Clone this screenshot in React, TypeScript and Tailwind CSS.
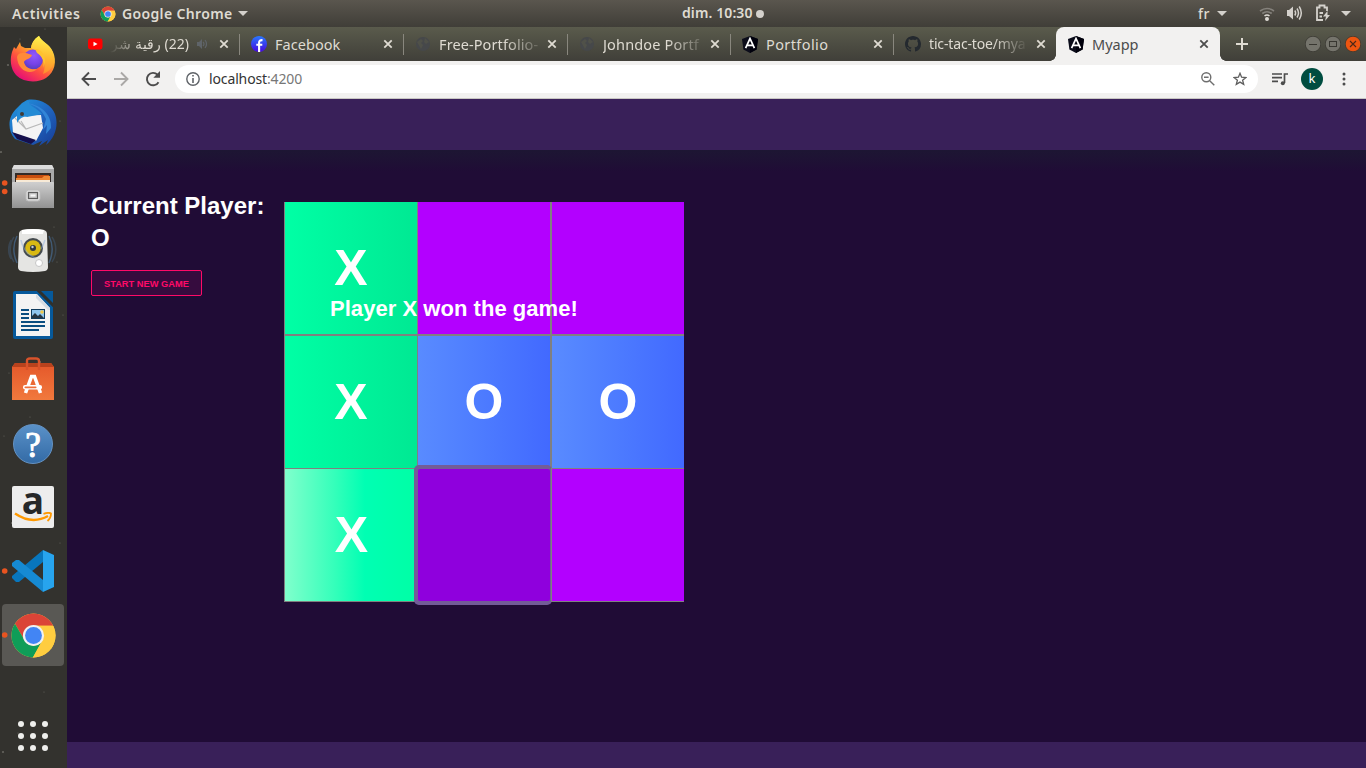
import React from "react";

const ui = "font-['Noto_Sans','Open_Sans',sans-serif]";

function Chrome({ size }: { size: number }) {
  return (
    <svg width={size} height={size} viewBox="0 0 48 48" className="shrink-0">
      <defs>
        <clipPath id={`chromeClip${size}`}>
          <circle cx="24" cy="24" r="22.5" />
        </clipPath>
      </defs>
      <g clipPath={`url(#chromeClip${size})`}>
        <rect width="48" height="48" fill="#ffcd40" />
        <path d="M0 0H48V14H24A10.4 10.4 0 0 0 15 29L4.5 11Z" fill="#db4437" />
        <path d="M0 8 4.5 11 15 29.2A10.4 10.4 0 0 0 33 29.2L22.5 48H0Z" fill="#0f9d58" />
        <path d="M24 14H48V48H22.5L33 29.2A10.4 10.4 0 0 0 24 14Z" fill="#ffcd40" />
      </g>
      <circle cx="24" cy="24" r="10.8" fill="#f1f1f1" />
      <circle cx="24" cy="24" r="8.6" fill="#4285f4" />
    </svg>
  );
}

function Firefox() {
  return (
    <svg width="48" height="48" viewBox="0 0 48 48">
      <defs>
        <linearGradient id="ffBody" x1="0.8" y1="0.1" x2="0.25" y2="0.95">
          <stop offset="0" stopColor="#fff44f" />
          <stop offset="0.35" stopColor="#ffa52a" />
          <stop offset="0.65" stopColor="#ff5040" />
          <stop offset="1" stopColor="#e60f75" />
        </linearGradient>
        <radialGradient id="ffGlobe" cx="0.55" cy="0.3" r="0.75">
          <stop offset="0" stopColor="#9059ff" />
          <stop offset="0.6" stopColor="#7542e5" />
          <stop offset="1" stopColor="#4f3fb5" />
        </radialGradient>
        <linearGradient id="ffTail" x1="0.6" y1="0" x2="0.5" y2="1">
          <stop offset="0" stopColor="#fff44f" />
          <stop offset="0.6" stopColor="#ffb52e" />
          <stop offset="1" stopColor="#ff8a30" />
        </linearGradient>
      </defs>
      <path d="M3 17 5 12 7 14 11 7 12 11 16 13 22 13C23 6 27 3 30 1C32 6 41 9 44 17C48 26 46 37 37 43C29 48 15 48 7 40C1 33 1 24 3 17Z" fill="url(#ffBody)" />
      <path d="M22 13C23 6 27 3 30 1C32 7 41 9 44 18C47 27 43 36 34 39C38 30 35 20 22 13Z" fill="url(#ffTail)" />
      <circle cx="24" cy="24.5" r="10" fill="url(#ffGlobe)" />
      <path d="M8 22C9 17 14 18 17 18L23 20C22 24 16 24 15 27C16 33 22 35 28 34C22 40 9 37 8 22Z" fill="#ff8a38" />
      <path d="M26 14C34 14 39 24 34 33C36 27 33 21 28 18Z" fill="#ffc22f" />
    </svg>
  );
}

function Thunderbird() {
  return (
    <svg width="50" height="50" viewBox="0 0 50 50" className="relative top-px">
      <defs>
        <linearGradient id="tb" x1="0" y1="0" x2="1" y2="1">
          <stop offset="0" stopColor="#1f9ae0" />
          <stop offset="0.5" stopColor="#2067c2" />
          <stop offset="1" stopColor="#173b94" />
        </linearGradient>
      </defs>
      <path d="M14 4 19 1C31 -1 43 5 47 15C51 26 47 39 38 46L40 41 31 47 34 42 25 46 7 40C-1 31 0 18 8 10Z" fill="url(#tb)" />
      <path d="M4 21 9 17 33 16 35 29 28 42 5 34Z" fill="#f4f4f4" />
      <path d="M7 19 18 30 35 24M18 30 13 22" fill="none" stroke="#b8b8b8" strokeWidth="1.1" />
      <path d="M4 33 28 41 23 45 9 40Z" fill="#160f4c" />
      <path d="M9 18C8 8 15 2 22 2C18 6 27 7 34 15L19 18C15 17 11 20 9 24Z" fill="#248bd5" />
      <path d="M15 4C28 5 34 11 38 20L35 31 39 26 38 35 43 29C44 15 32 4 15 4Z" fill="#3285d7" />
      <circle cx="14" cy="15" r="2" fill="#403a35" />
    </svg>
  );
}

function Files() {
  return (
    <svg width="44" height="46" viewBox="0 0 44 46">
      <defs>
        <linearGradient id="fl" x1="0" y1="0" x2="0" y2="1">
          <stop offset="0" stopColor="#cfcfcf" />
          <stop offset="1" stopColor="#929292" />
        </linearGradient>
      </defs>
      <path d="M3 1H41L43 5V44H1V5Z" fill="#a9a9a9" />
      <path d="M3 1H41L43 5H1Z" fill="#dcdcdc" />
      <rect x="4" y="9" width="36" height="10" fill="#332b27" />
      <path d="M6 11H38V20H5Z" fill="#c74e0e" />
      <path d="M5 14H31L33 12H39V20H5Z" fill="#f08a36" />
      <path d="M5 16H39V20H5Z" fill="#f7ead7" />
      <rect x="1" y="18" width="42" height="26" rx="1" fill="url(#fl)" />
      <rect x="15" y="26" width="14" height="11" rx="2.5" fill="#dedede" stroke="#bcbcbc" />
      <rect x="17.5" y="28.5" width="9" height="6" fill="#c8c8c8" stroke="#5c5c5c" strokeWidth="1.2" />
      <rect x="19.5" y="30.5" width="5" height="2" fill="#f7f7f7" />
    </svg>
  );
}

function Speaker() {
  return (
    <svg width="50" height="46" viewBox="0 0 50 46">
      <g fill="none" stroke="#456486" strokeWidth="1.5">
        <path d="M6 9C1 16 1 27 6 34M3 12C0 18 0 25 3 31" opacity=".4" />
        <path d="M9 8C5 16 5 26 9 35M41 8C45 16 45 26 41 35" opacity=".8" />
        <path d="M44 9C49 16 49 27 44 34" opacity=".4" />
      </g>
      <path d="M14 2Q25 0 36 2Q39 3 39 6L40 39Q40 42 37 43Q25 45 13 43Q10 42 10 39L11 6Q11 3 14 2Z" fill="#e5e5e3" />
      <path d="M14 2Q25 0 36 2L35 6H14Z" fill="#fff" />
      <circle cx="25" cy="20" r="10" fill="#444a4e" />
      <circle cx="25" cy="20" r="7.8" fill="#d8b913" />
      <circle cx="25" cy="20" r="3" fill="#303840" />
      <circle cx="24.5" cy="19" r="1.2" fill="#c8d0d4" />
      <circle cx="31" cy="35" r="3.5" fill="#fff" stroke="#c6c6c6" />
      <path d="M13 12Q15 24 27 30M37 12Q35 18 33 21" stroke="#89aee0" strokeWidth="1.5" fill="none" opacity=".45" />
    </svg>
  );
}

function Writer() {
  return (
    <svg width="42" height="50" viewBox="0 0 42 50">
      <path d="M3 1H25L41 17V47Q41 49 39 49H3Q1 49 1 47V3Q1 1 3 1Z" fill="#06599b" />
      <path d="M4 4H25L38 18V46H4Z" fill="#f3f3f3" />
      <path d="M24 4V8L36 20H38V18Z" fill="#d5dce4" />
      <path d="M25 1 41 17V13L29 1Z" fill="#2f302d" />
      <path d="M29 1H41V13Z" fill="#06599b" />
      <path d="M9 20H17M9 24H17M9 28H17M9 32H33M9 36H33M9 40H27" stroke="#094d80" strokeWidth="2" />
      <rect x="19.5" y="19.500" width="13" height="9" fill="#8ec5ee" stroke="#103c5e" />
      <circle cx="30" cy="22" r="1.8" fill="#f0c94a" />
      <path d="M20 28V26L23 23 26 26 28 24 32 28Z" fill="#253441" />
    </svg>
  );
}

function Bag() {
  return (
    <svg width="42" height="44" viewBox="0 0 42 44">
      <defs>
        <linearGradient id="bag" x1="0" y1="0" x2="0" y2="1">
          <stop offset="0" stopColor="#e4572a" />
          <stop offset="1" stopColor="#f1793d" />
        </linearGradient>
      </defs>
      <path d="M3 6H39L42 10V43H0V10Z" fill="url(#bag)" />
      <path d="M3 6H39L42 10H0Z" fill="#b8421d" />
      <path d="M15 13V4Q15 1.5 18 1.5H24Q27 1.5 27 4V13" fill="none" stroke="#d9532b" strokeWidth="2.4" />
      <path d="M13.5 36 19.5 19.5H22.5L28.5 36" fill="none" stroke="#fff" strokeWidth="3.5" />
      <rect x="11" y="28" width="19" height="4.4" rx="2" fill="#fff" />
      <rect x="12.5" y="29.4" width="12" height="1.8" rx=".8" fill="#ef703a" />
    </svg>
  );
}

function Code() {
  return (
    <svg width="42" height="42" viewBox="0 0 42 42">
      <path d="M31 0V12L7 32 4 32 0 28V26Z" fill="#0876bd" />
      <path d="M0 13 4 10 7 10 31 30V42L0 16Z" fill="#168ad3" />
      <path d="M31 0 42 5V37L31 42Z" fill="#27a4ee" />
    </svg>
  );
}

function Angular() {
  return (
    <svg width="16" height="17" viewBox="0 0 16 17" className="shrink-0">
      <path d="M8 0 16 3 14.6 13.5 8 17 1.4 13.5 0 3Z" fill="#0b0c1a" />
      <path d="M8 0 16 3 14.6 13.5 8 17Z" fill="#00000c" />
      <path d="M3.6 12.2 8 2.6 12.4 12.2M5.4 9.4H10.6" stroke="#fff" strokeWidth="1.7" fill="none" />
    </svg>
  );
}

function Youtube() {
  return (
    <svg width="16" height="12" viewBox="0 0 16 12" className="shrink-0">
      <rect x="1" y="0.5" width="14.5" height="11" rx="2.4" fill="#f00" />
      <path d="M6.5 3.7V8.3L10.5 6Z" fill="#fff" />
    </svg>
  );
}

function Facebook() {
  return (
    <svg width="16" height="16" viewBox="0 0 16 16" className="shrink-0">
      <defs>
        <linearGradient id="fb" x1="0" y1="0" x2="0" y2="1">
          <stop offset="0" stopColor="#2878ff" />
          <stop offset="1" stopColor="#4708dd" />
        </linearGradient>
      </defs>
      <circle cx="8" cy="8" r="8" fill="url(#fb)" />
      <path d="M8.1 16V6.5Q8.1 4 11.5 4.1M5.3 8.7H11.3" stroke="#fff" strokeWidth="2.1" fill="none" />
    </svg>
  );
}

function Globe() {
  return (
    <svg width="16" height="16" viewBox="0 0 16 16" className="shrink-0">
      <circle cx="8" cy="8" r="7" fill="#46484a" />
      <path d="M2 6 6 3 8 5 6 7 8 9 6 13ZM10 2 14 6 11 8 9 6Z" fill="#505149" />
    </svg>
  );
}

function Github() {
  return (
    <svg width="16" height="16" viewBox="0 0 16 16" fill="#24292f" className="shrink-0">
      <path d="M8 0C3.58 0 0 3.58 0 8c0 3.54 2.29 6.53 5.47 7.59.4.07.55-.17.55-.38v-1.49c-2.01.37-2.53-.49-2.69-.94-.09-.23-.48-.94-.82-1.13-.28-.15-.68-.52-.01-.53.63-.01 1.08.58 1.23.82.72 1.21 1.87.87 2.33.66.07-.52.28-.87.51-1.07-1.78-.2-3.64-.89-3.64-3.95 0-.87.31-1.59.82-2.15-.08-.2-.36-1.02.08-2.12 0 0 .67-.21 2.2.82.64-.18 1.32-.27 2-.27s1.36.09 2 .27c1.53-1.04 2.2-.82 2.2-.82.44 1.1.16 1.92.08 2.12.51.56.82 1.27.82 2.15 0 3.07-1.87 3.75-3.65 3.95.29.25.54.73.54 1.48v2.19c0 .21.15.46.55.38A8 8 0 0 0 16 8c0-4.42-3.58-8-8-8Z" />
    </svg>
  );
}

function Close({ color }: { color: string }) {
  return (
    <svg width="10" height="10" viewBox="0 0 10 10" className="shrink-0">
      <path d="m1.3 1.3 7.4 7.4m0-7.4-7.4 7.4" stroke={color} strokeWidth="1.8" />
    </svg>
  );
}

function Caret() {
  return (
    <svg width="10" height="5" viewBox="0 0 10 5" className="shrink-0">
      <path d="M0 0H10L5 5Z" fill="#d4d1cc" />
    </svg>
  );
}

type TabProps = {
  icon: React.ReactNode;
  width: string;
  label: string;
  textClass: string;
  fade?: boolean;
};

function Tab({ icon, width, label, textClass, fade }: TabProps) {
  return (
    <div className={`flex h-[34px] shrink-0 items-center ${width}`}>
      {icon}
      <div className={`ml-2 flex-1 overflow-hidden whitespace-nowrap text-[14.5px] leading-[22px] text-[#dfdbd2] ${textClass} ${fade ? "[mask-image:linear-gradient(90deg,#000_60%,transparent)]" : ""}`}>
        {label}
      </div>
      <div className="ml-[1px] mr-[10px] flex">
        <Close color="#dfdbd2" />
      </div>
      <div className="h-[21px] w-px bg-[#89877e]" />
    </div>
  );
}

function TopBar() {
  return (
    <div className={`flex h-[27px] shrink-0 items-center bg-linear-to-b from-[#5a564e] to-[#403e38] text-[14px] font-semibold text-[#dfdbd2] ${ui}`}>
      <span className="ml-[12px] w-[88px] tracking-[0.6px]">Activities</span>
      <Chrome size={16} />
      <span className="ml-[6px] w-[111px] whitespace-nowrap tracking-[0.35px]">Google Chrome</span>
      <span className="ml-[5px]"><Caret /></span>
      <span className="ml-[434px] w-[71px] whitespace-nowrap pb-[2px] tracking-[0.1px]">dim. 10:30</span>
      <span className="ml-[3px] h-2 w-2 rounded-full bg-[#d4d1cc]" />
      <span className="ml-[434px] w-[14px] font-medium tracking-[0.5px]">fr</span>
      <span className="ml-[5px]"><Caret /></span>
      <svg width="16" height="14" viewBox="0 0 16 14" className="ml-[32px]" fill="none" stroke="#85827c" strokeWidth="1.6">
        <path d="M1 4Q8-1 15 4M3.3 6.5Q8 3 12.7 6.5" />
        <path d="M5.5 9Q8 7 10.5 9" stroke="#dedbd5" />
        <circle cx="8" cy="12" r="1.2" fill="#dedbd5" stroke="#dedbd5" />
      </svg>
      <svg width="17" height="16" viewBox="0 0 17 16" className="relative -top-px ml-[11px]" fill="none" stroke="#d4d1cc" strokeWidth="1.5">
        <path d="M1 5H3L7 1.5V14.5L3 11H1Z" fill="#d4d1cc" stroke="none" />
        <path d="M8.8 5.5Q10.4 8 8.8 10.5M11 3.5Q14 8 11 12.5M13.2 1.5Q17.4 8 13.2 14.5" />
      </svg>
      <svg width="16" height="18" viewBox="0 0 16 18" className="relative -top-px ml-[12px]" fill="none" stroke="#d4d1cc" strokeWidth="1.8">
        <path d="M8 16H2V3.5H4.5V1.5H9.5V3.5H12V7M4.5 9H8M4.5 12.5H7" />
        <path d="M12.5 7 8 12.5H11L10 17 15 11H12.5Z" fill="#d4d1cc" stroke="none" />
      </svg>
      <span className="ml-[10px]"><Caret /></span>
    </div>
  );
}

function Sidebar() {
  const stars = [[8, 38], [45, 2], [20, 12], [60, 94], [1, 125], [12, 151], [54, 200], [63, 288], [40, 335], [30, 390], [4, 409], [49, 470], [12, 496], [60, 516], [44, 665], [18, 706], [3, 725], [61, 622], [57, 235], [9, 346]];
  return (
    <aside className="relative flex w-[67px] shrink-0 flex-col items-center bg-[#33322e]">
      <svg className="absolute inset-0" width="67" height="741">
        {stars.map(([x, y], i) => <circle key={i} cx={x} cy={y} r={i % 4 === 0 ? 1.1 : 0.6} fill="#66655f" />)}
        <g fill="#e95420">
          <circle cx="4.7" cy="156" r="2.8" /><circle cx="4.7" cy="164.5" r="2.8" />
          <circle cx="4.7" cy="544" r="2.8" />
        </g>
      </svg>
      <div className="relative flex w-full flex-col items-center pr-[1px]">
        <div className="flex h-[64px] items-center"><Firefox /></div>
        <div className="flex h-[64px] items-center"><Thunderbird /></div>
        <div className="flex h-[64px] items-center"><Files /></div>
        <div className="flex h-[64px] items-center"><Speaker /></div>
        <div className="flex h-[64px] items-center"><Writer /></div>
        <div className="flex h-[64px] items-center"><Bag /></div>
        <div className="flex h-[64px] items-center pt-[2px]">
          <div className="flex h-10 w-10 items-center justify-center rounded-full border border-[#6593c4] bg-linear-to-b from-[#5a91c8] to-[#336ba6] pt-[2px] font-['Liberation_Serif',serif] text-[35px] leading-none text-white [-webkit-text-stroke:1px_white]">?</div>
        </div>
        <div className="flex h-[64px] items-center">
          <div className="flex h-[42px] w-[42px] flex-col items-center rounded-[2px] bg-[#ededed]">
            <div className="-mt-[7px] h-[33px] font-['Open_Sans',sans-serif] text-[37px] font-bold leading-[42px] text-[#262829]">a</div>
            <svg width="42" height="12" viewBox="0 0 42 12">
              <path d="M3 1.5Q20 13 36 4" fill="none" stroke="#ff9900" strokeWidth="2.4" />
              <path d="M31.500 1.800Q37 0 39 1.500Q39 6 35.500 9" fill="none" stroke="#ff9900" strokeWidth="1.8" />
            </svg>
          </div>
        </div>
        <div className="flex h-[64px] items-center"><Code /></div>
        <div className="mt-[1px] flex h-[62px] w-[62px] items-center justify-center rounded-[4px] bg-[#595854]"><Chrome size={47} /></div>
      </div>
      <svg className="absolute left-0 top-[605px]" width="9" height="9"><circle cx="4.7" cy="3" r="2.8" fill="#e95420" /></svg>
      <div className="relative mt-auto mb-[17px] mr-[1px] grid grid-cols-3 gap-[6px]">
        {Array.from({ length: 9 }, (_, i) => <span key={i} className="h-[6px] w-[6px] rounded-full bg-[#eeeeec]" />)}
      </div>
    </aside>
  );
}

function TabStrip() {
  return (
    <div className={`flex h-[34px] shrink-0 items-center bg-linear-to-b from-[#5a5b4c] to-[#403f39] pl-[20px] ${ui}`}>
      <div className="flex h-[34px] w-[153px] shrink-0 items-center">
        <Youtube />
        <div dir="rtl" className="ml-[7px] w-[79px] overflow-hidden whitespace-nowrap text-right text-[14px] leading-[22px] tracking-[-0.1px] text-[#dfdbd2] [mask-image:linear-gradient(270deg,#000_60%,transparent)]">(22) رقية شر</div>
        <svg width="10" height="10" viewBox="0 0 10 10" className="ml-[8px]" fill="none" stroke="#5f6469" strokeWidth="1.2">
          <path d="M0 3H2L5 0V10L2 7H0Z" fill="#5f6469" stroke="none" />
          <path d="M6 3Q8 5 6 7M8 1Q11 5 8 9" />
        </svg>
        <span className="ml-[12px]"><Close color="#dfdbd2" /></span>
        <div className="ml-[10px] h-[21px] w-px bg-[#89877e]" />
      </div>
      <div className="ml-[11px] flex gap-[11px]">
        <Tab icon={<Facebook />} width="w-[153px]" label="Facebook" textClass="tracking-[0.05px]" />
        <Tab icon={<Globe />} width="w-[153px]" label="Free-Portfolio-" textClass="tracking-[0.1px]" fade />
        <Tab icon={<Globe />} width="w-[152px]" label="Johndoe Portf" textClass="tracking-[0.15px]" fade />
        <Tab icon={<Angular />} width="w-[152px]" label="Portfolio" textClass="tracking-[0.4px]" />
        <div className="flex h-[34px] w-[151px] items-center">
          <Github />
          <div className="ml-2 w-[99px] overflow-hidden whitespace-nowrap text-[14px] leading-[22px] tracking-[-0.15px] text-[#dfdbd2] [mask-image:linear-gradient(90deg,#000_65%,transparent)]">tic-tac-toe/mya</div>
          <span className="ml-[8px]"><Close color="#dfdbd2" /></span>
        </div>
      </div>
      <div className="relative flex h-[34px] w-[164px] shrink-0 items-center rounded-t-[8px] bg-[#f2f1f0] pl-[12px]">
        <span className="absolute -left-[6px] bottom-0 h-[6px] w-[6px] bg-[radial-gradient(circle_at_0_0,transparent_5.5px,#f2f1f0_6px)]" />
        <span className="absolute -right-[6px] bottom-0 h-[6px] w-[6px] bg-[radial-gradient(circle_at_100%_0,transparent_5.5px,#f2f1f0_6px)]" />
        <Angular />
        <span className="ml-[8px] w-[107px] text-[14.5px] leading-[22px] text-[#4c4c4c]">Myapp</span>
        <Close color="#4c4c4c" />
      </div>
      <svg width="12" height="12" viewBox="0 0 12 12" className="ml-[16px] shrink-0"><path d="M6 0V12M0 6H12" stroke="#dfdbd2" strokeWidth="2" /></svg>
      <div className="ml-auto mr-[5px] flex gap-[4px]">
        {["min", "max", "close"].map((kind) => (
          <svg key={kind} width="16" height="16" viewBox="0 0 16 16">
            <circle cx="8" cy="8" r="7.8" fill={kind === "close" ? "#ed5510" : "#75746c"} stroke="#383731" strokeWidth=".8" />
            {kind === "min" && <path d="M4 8.5H12" stroke="#383731" />}
            {kind === "max" && <rect x="4.5" y="5.5" width="7" height="5" fill="none" stroke="#383731" />}
            {kind === "close" && <path d="m5 5 6 6m0-6-6 6" stroke="#4a2818" strokeWidth="1.1" />}
          </svg>
        ))}
      </div>
    </div>
  );
}

function Toolbar() {
  return (
    <div className={`flex h-[38px] shrink-0 items-center border-b border-[#c8c6c3] bg-[#f2f1f0] pb-[1px] ${ui}`}>
      <svg width="16" height="16" viewBox="0 0 16 16" className="ml-[14px]" fill="none" stroke="#4c4c4c" strokeWidth="1.9"><path d="M15 8H2M8 1.5 1.5 8 8 14.5" /></svg>
      <svg width="16" height="16" viewBox="0 0 16 16" className="ml-[16px]" fill="none" stroke="#aaa8a6" strokeWidth="1.9"><path d="M1 8H14M8 1.5 14.5 8 8 14.5" /></svg>
      <svg width="16" height="16" viewBox="0 0 16 16" className="ml-[16px]" fill="none" stroke="#4c4c4c" strokeWidth="1.9"><path d="M13.5 11.2A6.2 6.2 0 1 1 12.5 3.7L14 5.2" /><path d="M15 0V6.7H8.3Z" fill="#4c4c4c" stroke="none" /></svg>
      <div className="ml-[14px] flex h-[28px] w-[1083px] items-center rounded-full bg-white pl-[11px]">
        <svg width="14" height="14" viewBox="0 0 14 14" fill="none" stroke="#5f6368" strokeWidth="1.4"><circle cx="7" cy="7" r="6.2" /><path d="M7 3V4.5M7 6V11" strokeWidth="1.6" /></svg>
        <span className="ml-[9px] pb-[1px] text-[14px] tracking-[-0.13px] text-[#333]">localhost<span className="text-[#777]">:4200</span></span>
        <svg width="14" height="14" viewBox="0 0 14 14" className="ml-auto" fill="none" stroke="#6e6e6e" strokeWidth="1.4"><circle cx="5.3" cy="5.3" r="4.5" /><path d="M3 5.3H7.6M8.7 8.7 13.3 13.3" /></svg>
        <svg width="14" height="14" viewBox="0 0 14 14" className="ml-[18px] mr-[11px]" fill="none" stroke="#5e5e5e" strokeWidth="1.3"><path d="M7 1.3 8.6 5.2 12.9 5.5 9.6 8.2 10.7 12.4 7 10.1 3.3 12.4 4.4 8.2 1.1 5.5 5.4 5.2Z" /></svg>
      </div>
      <svg width="16" height="13" viewBox="0 0 16 13" className="ml-[14px]" fill="none" stroke="#4c4c4c" strokeWidth="1.7"><path d="M0 1H10M0 4.7H10M0 8.4H6M16 1H12.5V10" /><circle cx="10.8" cy="10.3" r="2" fill="#4c4c4c" stroke="none" /></svg>
      <div className="ml-[13px] flex h-[22px] w-[22px] items-center justify-center rounded-full bg-[#004d40] text-[13px] text-white">k</div>
      <svg width="4" height="14" viewBox="0 0 4 14" className="ml-[19px]" fill="#4c4c4c"><circle cx="2" cy="2" r="1.5" /><circle cx="2" cy="7" r="1.5" /><circle cx="2" cy="12" r="1.5" /></svg>
    </div>
  );
}

const green = "bg-linear-to-r from-[#00ffa5] to-[#00e993]";
const blue = "bg-linear-to-r from-[#598bff] to-[#4269ff]";
const board = [
  { mark: "X", style: `border-l border-r border-b ${green}` },
  { mark: "", style: "border-r border-b bg-[#b300ff]" },
  { mark: "", style: "border-l border-b bg-[#b300ff]" },
  { mark: "X", style: `border-l border-r border-t ${green}` },
  { mark: "O", style: `border-r border-t ${blue}` },
  { mark: "O", style: `border-l border-t ${blue}` },
  { mark: "X", style: "border-l border-t border-b bg-[linear-gradient(90deg,#80ffcc,#33ffba_38%,#00ffb3_60%,#00ffa5)]" },
  { mark: "", style: "relative my-px mr-px rounded-[2px] bg-[#8f00dd] shadow-[-1px_-1px_0_3px_#735c98,-1px_1px_0_3px_#735c98]" },
  { mark: "", style: "relative z-10 border-l border-t border-b bg-[#b300ff]" },
];

function Game() {
  return (
    <main className="flex min-h-0 flex-1 flex-col bg-[#200c36] font-['Liberation_Sans',sans-serif] text-white">
      <div className="h-[51px] shrink-0 bg-[#392059]" />
      <div className="flex min-h-0 flex-1 bg-[linear-gradient(180deg,#1d1633_0px,#200c36_22px)] pl-[24px] pt-[40px]">
        <section className="w-[193px] shrink-0">
          <h2 className="text-[24px] font-bold leading-8">Current Player:<br />O</h2>
          <button className="mt-[16px] flex h-[26px] w-[111px] items-center justify-center whitespace-nowrap rounded-[2px] border border-[#ff0a68] bg-[#360c3e] pt-[1px] text-[9.3px] font-bold leading-[12px] text-[#ff0a68]">START NEW GAME</button>
        </section>
        <section className="relative mt-[12px] grid h-[400px] w-[400px] grid-cols-[134px_133px_133px] grid-rows-[133px_133px_134px]">
          {board.map((cell, i) => (
            <button key={i} className={`flex items-center justify-center border-[#808080] text-[50px] font-bold leading-none ${cell.style}`}>
              {cell.mark}
            </button>
          ))}
          <h2 className="absolute left-[46px] top-[91px] z-20 whitespace-nowrap text-[22px] font-bold leading-8 tracking-[0.04px]">Player X won the game!</h2>
        </section>
      </div>
      <div className="h-[26px] shrink-0 bg-[#392059]" />
    </main>
  );
}

export default function App() {
  return (
    <div className="flex h-screen w-screen flex-col overflow-hidden bg-[#33322e]">
      <TopBar />
      <div className="flex min-h-0 flex-1">
        <Sidebar />
        <div className="flex min-w-0 flex-1 flex-col">
          <TabStrip />
          <Toolbar />
          <Game />
        </div>
      </div>
    </div>
  );
}
